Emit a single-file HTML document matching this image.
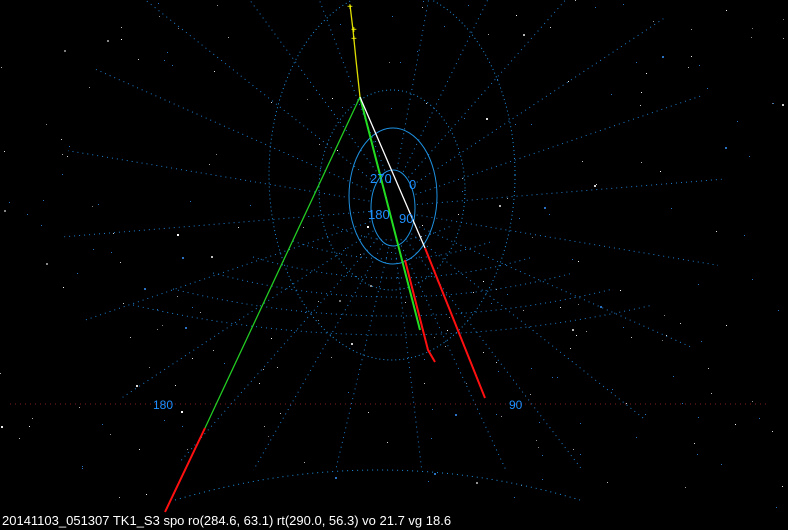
<!DOCTYPE html>
<html><head><meta charset="utf-8"><style>
html,body{margin:0;padding:0;background:#000;width:788px;height:530px;overflow:hidden}
svg{display:block}
text{font-family:"Liberation Sans",sans-serif}
</style></head><body>
<svg id="s" width="788" height="530" viewBox="0 0 788 530" xmlns="http://www.w3.org/2000/svg">
<rect width="788" height="530" fill="#000"/>
<g id="stars" fill="#bbb"></g>
<g id="grid" fill="none" stroke="#1e90e0" stroke-width="1">
<ellipse cx="393" cy="208" rx="22" ry="38"/>
<ellipse cx="393" cy="196" rx="44" ry="68"/>
<ellipse cx="392" cy="190" rx="73" ry="100" stroke-dasharray="1 3"/>
<ellipse cx="392" cy="175" rx="123" ry="185" stroke-dasharray="1 3"/>
<path d="M175 500 Q380 440 580 500" stroke-dasharray="1 4"/>
</g>
<g id="rad" fill="none" stroke="#1e7fd0" stroke-width="1" stroke-dasharray="1 4"></g>
<line x1="10" y1="404" x2="770" y2="404" stroke="#802020" stroke-dasharray="1 4"/>
<g fill="none" stroke-width="1.3">
<polyline points="350,5 353,30 356,60 360,97" stroke="#dddd00"/>
<polyline points="360,97 205,428" stroke="#22cc22"/>
<polyline points="205,428 165,512" stroke="#ff1010" stroke-width="2"/>
<polyline points="360,97 420,330" stroke="#22dd22" stroke-width="2"/>
<polyline points="405,260 428,350 435,362" stroke="#ff1010" stroke-width="2"/>
<polyline points="360,97 425,248" stroke="#ffffff"/>
<polyline points="425,248 485,398" stroke="#ff1010" stroke-width="2"/>
</g>
<g fill="#ffff00" font-size="10"><text x="347" y="10">+</text><text x="351" y="33">+</text><text x="351" y="42">+</text></g>
<g fill="#1e90ff" font-size="13">
<text x="370" y="183">270</text><text x="409" y="189">0</text>
<text x="368" y="219">180</text><text x="399" y="223">90</text>
<text x="153" y="409" font-size="12">180</text><text x="509" y="409" font-size="12">90</text>
</g>
<text x="2" y="525" fill="#fff" font-size="13">20141103_051307 TK1_S3 spo ro(284.6, 63.1) rt(290.0, 56.3) vo 21.7 vg 18.6</text>
</svg>
<script>
var ns="http://www.w3.org/2000/svg";
var seed=7;function r(){seed=(seed*16807)%2147483647;return seed/2147483647;}
var st=document.getElementById("stars");
for(var i=0;i<260;i++){var c=document.createElementNS(ns,"rect");var b=r()<0.1?2:1;
c.setAttribute("x",Math.floor(r()*788));c.setAttribute("y",Math.floor(r()*510));c.setAttribute("width",b);c.setAttribute("height",b);
var g=Math.floor(120+r()*135);c.setAttribute("fill",r()<0.6?"rgb("+g+","+g+","+g+")":"#2a70c0");st.appendChild(c);}
var rd=document.getElementById("rad");
for(var a=-80;a<=260;a+=15){var t=a*Math.PI/180;var p=document.createElementNS(ns,"line");
var x1=393+Math.cos(t)*24,y1=208+Math.sin(t)*40,x2=393+Math.cos(t)*330,y2=208+Math.sin(t)*330;
if(y2>470)y2=470;
p.setAttribute("x1",x1);p.setAttribute("y1",y1);p.setAttribute("x2",x2);p.setAttribute("y2",y2);rd.appendChild(p);}
for(var k=0;k<6;k++){var e=document.createElementNS(ns,"path");var y=235+k*22,w=60+k*40;
e.setAttribute("d","M"+(393-w)+" "+(y-10-k*6)+" Q393 "+(y+20)+" "+(393+w)+" "+(y-10-k*6));rd.appendChild(e);}
</script>
</body></html>
